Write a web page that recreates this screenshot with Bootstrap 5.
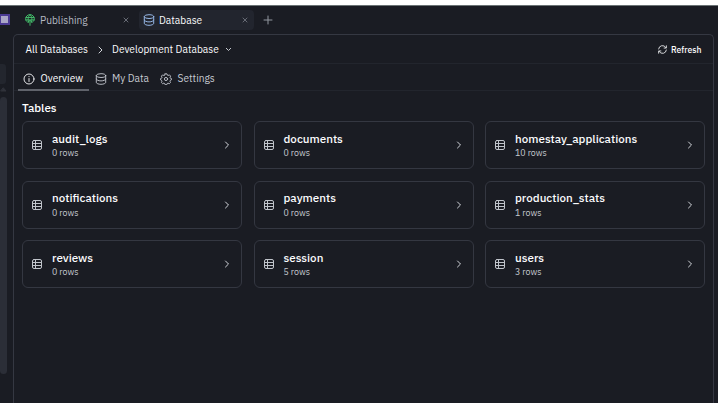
<!DOCTYPE html>
<html lang="en" data-bs-theme="dark">
<head>
<meta charset="utf-8">
<meta name="viewport" content="width=device-width, initial-scale=1">
<title>Database</title>
<link href="https://cdn.jsdelivr.net/npm/bootstrap@5.3.0/dist/css/bootstrap.min.css" rel="stylesheet">
<style>
body{background:#1a1c23;color:#fafbfd;font-family:"IBM Plex Sans","Noto Sans",sans-serif;font-size:10.2px;line-height:14px;height:403px}
svg{fill:none;stroke:currentColor;stroke-linecap:round;stroke-linejoin:round;flex:none;display:block}
.top-strip{height:6px;background:#fff;border-bottom:1px solid #6a7274}
.side-rail{width:13px;height:397px}
.rail-app{width:10px;height:11px;margin-top:8px;background:#aaa6c6;border:2px solid #4b3a93;border-left-width:1px}
.rail-box{width:6px;height:20px;margin-top:39px;background:#23262e;border-radius:0 3px 3px 0}
.rail-up{width:7px;height:5px;margin:3px 0 5px;color:#30333b}
.rail-thumb{width:7px;height:277px;background:#2b2e37;border-radius:4px}
.tab-strip{height:28px;padding-left:5px}
.win-tab{height:20px;width:115px;margin-top:4px;border-radius:4px;color:#b5b9c1;padding:0 4px 0 7px}
.win-tab span{padding-top:1px}
.win-tab.current{background:#22252e;color:#fafbfd;margin-left:6px;padding:0 6.5px 0 4px}
.tab-close{color:#686c76}
.tab-add{color:#9297a0;margin:9px 0 0 9px}
.globe{color:#42b768;margin-right:5px}
.db-blue{color:#96b7e6}
.panel{margin-right:4px;border:1px solid #353842;border-bottom:0;border-radius:5px 5px 0 0;height:369px}
.crumbs{height:29px;padding:1px 11.5px 0 11.5px;border-bottom:1px solid #22252d}
.crumb-sep{color:#d2d5da;margin:0 9.5px 0 9.5px}
.crumb-menu{color:#c6cad1;margin-left:6.5px}
.views{height:27px;border-bottom:1px solid #22252d;padding-left:4px}
.view{height:27px;color:#c6cad1;padding-top:3px}
.view svg{margin-right:5.5px}
.view.current{width:71px;padding-left:5px;border-bottom:2px solid #60636b;color:#fafbfd;padding-top:4px}
.view-data{margin-left:5.5px}
.view-set{margin-left:11px}
.section-title{font-size:11.6px;line-height:16px;font-weight:500;margin:8.5px 0 5.5px 8px}
.table-grid{display:grid;grid-template-columns:repeat(3,1fr);gap:11.5px;padding:0 8px}
.table-tile{height:48px;border:1px solid #343741;border-radius:6px;padding:0 11px 0 8px}
.tile-icon{color:#c0c4cb;margin-right:9px}
.tile-name{font-size:11.6px;line-height:15px;font-weight:500}
.tile-rows{font-size:8.8px;line-height:12px;color:#c6cad1;margin-top:1.5px}
.tile-go{color:#d2d5da}
.refresh{font-size:8.6px;font-weight:500}
</style>
</head>
<body class="overflow-hidden">
<svg width="0" height="0" class="position-absolute"><defs>
<symbol id="db" viewBox="0 0 12 12"><ellipse cx="6" cy="2.6" rx="4.7" ry="1.9"/><path d="M1.3 2.6v6.8C1.3 10.4 3.4 11.3 6 11.3s4.7-.9 4.7-1.9V2.6M1.3 6c0 1 2.1 1.9 4.7 1.9S10.7 7 10.7 6"/></symbol>
<symbol id="grid" viewBox="0 0 12 12"><rect x="1.5" y="1.5" width="9" height="9" rx="1.5"/><path d="M1.5 4.5h9M1.5 7.5h9M4.5 1.5v9"/></symbol>
<symbol id="chev" viewBox="0 0 6 10"><path d="M1.5 2 4.5 5 1.5 8"/></symbol>
<symbol id="close" viewBox="0 0 6 6"><path d="m1 1 4 4M5 1 1 5"/></symbol>
</defs></svg>
<div class="top-strip"></div>
<div class="d-flex">
  <aside class="side-rail flex-shrink-0">
    <div class="rail-app"></div><div class="rail-box"></div>
    <svg class="rail-up" viewBox="0 0 7 5"><path d="M3.5 1 6 4H1z" fill="currentColor"/></svg>
    <div class="rail-thumb"></div>
  </aside>
  <main class="flex-grow-1">
    <div class="tab-strip d-flex">
      <div class="win-tab d-flex align-items-center">
        <svg class="globe" width="10" height="12" viewBox="0 0 10 12"><path d="M3.4 8.4C1.7 8 .7 6.6.7 4.9a4.3 4.3 0 0 1 8.6 0c0 1.7-1 3.1-2.7 3.5M1 3.5h8M.8 5.9h8.4M3.5 7.8C2.6 5.5 3 2.3 5 .7c2 1.6 2.4 4.8 1.5 7.1M5 11.3V6.5M3.5 7.8 5 6.2l1.5 1.6"/></svg>
        <span>Publishing</span>
        <svg class="tab-close ms-auto" width="6" height="6"><use href="#close"/></svg>
      </div>
      <div class="win-tab current d-flex align-items-center">
        <svg class="db-blue" width="12" height="12"><use href="#db"/></svg>
        <span class="ms-1">Database</span>
        <svg class="tab-close ms-auto" width="6" height="6"><use href="#close"/></svg>
      </div>
      <svg class="tab-add" width="10" height="10" viewBox="0 0 10 10"><path d="M5 1v8M1 5h8"/></svg>
    </div>
    <section class="panel">
      <div class="crumbs d-flex align-items-center">
        <span>All Databases</span>
        <svg class="crumb-sep" width="5" height="8" viewBox="0 0 5 8"><path d="M1 1 4 4 1 7"/></svg>
        <span>Development Database</span>
        <svg class="crumb-menu" width="7" height="5" viewBox="0 0 7 5"><path d="m1.3 1.3 2.2 2.2 2.2-2.2"/></svg>
        <span class="refresh ms-auto d-flex align-items-center">
          <svg width="9" height="9" viewBox="0 0 10 10" stroke-width=".9"><path d="M.7 4.4A4.3 4.3 0 0 1 8.6 2.7M9.3 5.6A4.3 4.3 0 0 1 1.4 7.3M9.3.9v2.5H6.8M.7 9.1V6.6h2.5"/></svg>
          <span class="ms-1">Refresh</span></span>
      </div>
      <nav class="views d-flex">
        <div class="view current d-flex align-items-center"><svg width="12" height="12" viewBox="0 0 12 12" stroke-width=".9"><circle cx="6" cy="6" r="5"/><path d="M6 5.5v3M6 3.5v.2"/></svg><span>Overview</span></div>
        <div class="view view-data d-flex align-items-center"><svg width="12" height="12" stroke-width=".9"><use href="#db"/></svg><span>My Data</span></div>
        <div class="view view-set d-flex align-items-center"><svg width="12" height="12" viewBox="0 0 12 12" stroke-width=".9"><circle cx="6" cy="6" r="1.6"/><path d="m5.1.8h1.8l.4 1.3.8.4 1.3-.6 1.2 1.2-.6 1.3.4.8 1 .3v1.4l-1.1.5-.4.8.6 1.3-1.2 1.2-1.3-.6-.8.4-.4 1.2H5.1l-.4-1.2-.8-.4-1.3.6-1.2-1.2.6-1.3-.4-.8L.6 6.9V5.5l1-.3.4-.8-.6-1.3 1.2-1.2 1.3.6.8-.4z"/></svg><span>Settings</span></div>
      </nav>
      <h1 class="section-title">Tables</h1>
      <div class="table-grid" id="tables"></div>
    </section>
  </main>
</div>
<script>
const tables=[["audit_logs",0],["documents",0],["homestay_applications",10],["notifications",0],["payments",0],["production_stats",1],["reviews",0],["session",5],["users",3]];
document.getElementById("tables").innerHTML=tables.map(([name,rows])=>`<div class="table-tile d-flex align-items-center"><svg class="tile-icon" width="12" height="12" stroke-width="1"><use href="#grid"/></svg><div><div class="tile-name">${name}</div><div class="tile-rows">${rows} rows</div></div><svg class="tile-go ms-auto" width="6" height="10"><use href="#chev"/></svg></div>`).join("");
</script>
<script src="https://cdn.jsdelivr.net/npm/bootstrap@5.3.0/dist/js/bootstrap.bundle.min.js"></script>
</body>
</html>
